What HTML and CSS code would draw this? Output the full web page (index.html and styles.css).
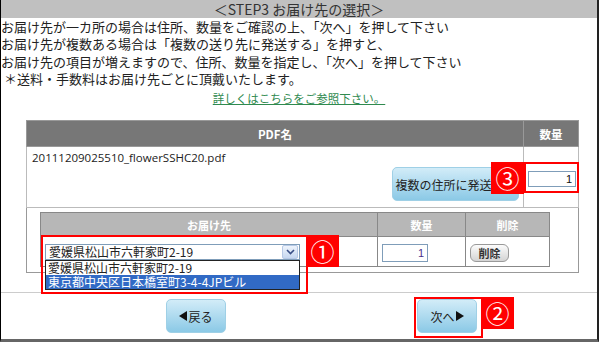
FILE: index.html
```html
<!DOCTYPE html>
<html lang="ja">
<head>
  <meta charset="utf-8">
  <title>STEP3 お届け先の選択</title>
  <link rel="stylesheet" href="styles.css">
</head>
<body>
<div class="frame">
  <div class="step-title">＜STEP3 お届け先の選択＞</div>
  <div class="notes">
    <p>お届け先が一カ所の場合は住所、数量をご確認の上、「次へ」を押して下さい</p>
    <p>お届け先が複数ある場合は「複数の送り先に発送する」を押すと、</p>
    <p>お届け先の項目が増えますので、住所、数量を指定し、「次へ」を押して下さい</p>
    <p class="note-sub">＊送料・手数料はお届け先ごとに頂戴いたします。</p>
  </div>
  <p class="more"><a href="#">詳しくはこちらをご参照下さい。</a></p>

  <table class="pdf-table">
    <tr class="head-row">
      <th class="col-name">PDF名</th>
      <th class="col-qty">数量</th>
    </tr>
    <tr class="pdf-row">
      <td class="pdf-cell">
        <div class="file-name">20111209025510_flowerSSHC20.pdf</div>
        <button class="btn-blue btn-multi">複数の住所に発送する</button>
      </td>
      <td class="qty-cell"><input class="qty" value="1"></td>
    </tr>
    <tr>
      <td colspan="2" class="dest-wrap">
        <table class="dest-table">
          <tr class="dest-head">
            <th class="col-dest">お届け先</th>
            <th class="col-num">数量</th>
            <th class="col-del">削除</th>
          </tr>
          <tr class="dest-row">
            <td>
              <div class="select">
                <div class="select-box">
                  <span>愛媛県松山市六軒家町2-19</span>
                  <span class="select-arrow">
                    <svg width="9" height="6" viewBox="0 0 9 6"><path d="M1 1 L4.5 4.5 L8 1" fill="none" stroke="#3a4f86" stroke-width="1.6"/></svg>
                  </span>
                </div>
                <ul class="select-list">
                  <li>愛媛県松山市六軒家町2-19</li>
                  <li class="selected">東京都中央区日本橋室町3-4-4JPビル</li>
                </ul>
              </div>
            </td>
            <td><input class="qty qty-small" value="1"></td>
            <td><button class="btn-gray">削除</button></td>
          </tr>
        </table>
      </td>
    </tr>
  </table>

  <div class="actions">
    <button class="btn-blue btn-nav btn-back">
      <svg width="8" height="10" viewBox="0 0 8 10"><path d="M8 0 L0 5 L8 10 Z" fill="#111"/></svg>戻る
    </button>
    <button class="btn-blue btn-nav btn-next">
      次へ<svg width="8" height="10" viewBox="0 0 8 10"><path d="M0 0 L8 5 L0 10 Z" fill="#111"/></svg>
    </button>
  </div>

  <!-- annotation callouts -->
  <div class="callout callout-1"><span class="callout-num num-right">①</span></div>
  <div class="callout callout-2"><span class="callout-num num-right">②</span></div>
  <div class="callout callout-3"><span class="callout-num num-left">③</span></div>
</div>
</body>
</html>
```

FILE: styles.css
```css
body {
  margin: 0;
  background: #fff;
  color: #222;
  font-family: "Noto Sans CJK JP", sans-serif;
}
.frame {
  position: relative;
  width: 599px;
  height: 342px;
  box-sizing: border-box;
  border-left: 1px solid #000;
  border-right: 2px solid #222;
  border-bottom: 3px solid #666;
  overflow: hidden;
}
.step-title {
  height: 18px;
  background: #c0c0c0;
  text-align: center;
  font-size: 14px;
  line-height: 18px;
  color: #333;
}
.notes p {
  margin: 0;
  font-size: 13px;
  line-height: 17.3px;
  white-space: nowrap;
}
.notes .note-sub {
  padding-left: 3px;
}
.more {
  margin: 3px 0 0;
  text-align: center;
  font-size: 11.5px;
  line-height: 16px;
}
.more a {
  color: #2f8a4f;
}

/* pdf table */
.pdf-table {
  margin: 14px 0 0 25px;
  width: 553px;
  border-collapse: collapse;
  border: 1px solid #999;
}
.head-row {
  height: 26px;
}
.head-row th {
  padding: 0;
  background: #777;
  color: #fff;
  font-size: 11.5px;
  font-weight: bold;
  border: 1px solid #999;
}
.col-name {
  width: 496px;
}
.pdf-row {
  height: 61px;
}
.pdf-row td {
  border: 1px solid #bbb;
}
.pdf-cell {
  padding: 3px 4px 4px 5px;
  vertical-align: top;
}
.file-name {
  font-family: "Open Sans", sans-serif;
  font-size: 11.5px;
  line-height: 16px;
}
.pdf-cell .btn-multi {
  display: block;
  margin: 1px 0 0 auto;
}
.qty-cell {
  padding: 0 0 0 4px;
  vertical-align: middle;
  line-height: 16px;
}
.qty {
  box-sizing: border-box;
  width: 48px;
  height: 16px;
  padding: 0 3px;
  border: 1px solid #7f9db9;
  text-align: right;
  font-family: "Liberation Sans", sans-serif;
  font-size: 11px;
  color: #111;
  vertical-align: middle;
}
.qty-small {
  width: 46px;
  height: 18px;
  color: #4a2f8a;
}
.dest-wrap {
  padding: 4px 0 5px 13px;
  border-top: 1px solid #ccc;
}

/* inner destination table */
.dest-table {
  width: 510px;
  border-collapse: collapse;
  border: 1px solid #888;
}
.dest-head {
  height: 24px;
}
.dest-head th {
  padding: 0;
  background: #b7b7b7;
  color: #fff;
  font-size: 11px;
  font-weight: bold;
  border: 1px solid #888;
}
.col-dest {
  width: 336px;
}
.col-num {
  width: 87px;
}
.dest-row {
  height: 30px;
}
.dest-row td {
  padding: 0 4px;
  border: 1px solid #888;
  line-height: 18px;
}

/* fake opened select */
.select {
  position: relative;
  width: 255px;
}
.select-box {
  display: flex;
  align-items: center;
  justify-content: space-between;
  box-sizing: border-box;
  height: 16px;
  padding: 0 1px 0 3px;
  border: 1px solid #7f9db9;
  font-size: 12px;
  line-height: 14px;
}
.select-arrow {
  display: flex;
  align-items: center;
  justify-content: center;
  width: 14px;
  height: 12px;
  background: linear-gradient(#eef4fc, #c6d7f0);
  border: 1px solid #b7c9e6;
  border-radius: 2px;
}
.select-list {
  position: absolute;
  top: 100%;
  left: 0;
  right: 0;
  margin: 0;
  padding: 0;
  list-style: none;
  background: #fff;
  border: 1px solid #222;
  font-size: 12px;
  line-height: 14px;
}
.select-list li {
  padding: 0 2px;
}
.select-list .selected {
  background: #316ac5;
  color: #fff;
}

/* buttons */
.btn-blue {
  display: flex;
  align-items: center;
  justify-content: center;
  padding: 0;
  background: linear-gradient(#d2ecf8, #8bc9e6);
  border: 1px solid #9fd0e6;
  border-radius: 5px;
  font-family: "Noto Sans CJK JP", sans-serif;
  font-size: 12px;
  color: #222;
}
.btn-multi {
  width: 127px;
  height: 34px;
}
.btn-nav {
  width: 60px;
  height: 34px;
  gap: 1px;
}
.btn-gray {
  width: 39px;
  height: 18px;
  padding: 0;
  background: linear-gradient(#fcfcfc, #d4d4d4);
  border: 1px solid #999;
  border-radius: 6px;
  font-family: "Noto Sans CJK JP", sans-serif;
  font-size: 11px;
  font-weight: bold;
  color: #333;
  vertical-align: middle;
}
.actions {
  display: flex;
  align-items: center;
  gap: 191px;
  height: 46px;
  margin-top: 19px;
  padding-left: 165px;
  border-top: 1px solid #ccc;
}

/* red callouts */
.callout {
  position: absolute;
  box-sizing: border-box;
  border: 2px solid #f00;
}
.callout-num {
  position: absolute;
  top: -2px;
  display: flex;
  align-items: center;
  justify-content: center;
  width: 33px;
  height: 32px;
  background: #f00;
  color: #fff;
  font-size: 24px;
  line-height: 1;
}
.num-right {
  left: 100%;
}
.num-left {
  right: calc(100% + 2px);
}
.callout-1 {
  left: 40px;
  top: 235px;
  width: 267px;
  height: 59px;
}
.callout-2 {
  left: 413px;
  top: 297px;
  width: 69px;
  height: 41px;
}
.callout-3 {
  left: 523px;
  top: 162px;
  width: 55px;
  height: 31px;
}
```
